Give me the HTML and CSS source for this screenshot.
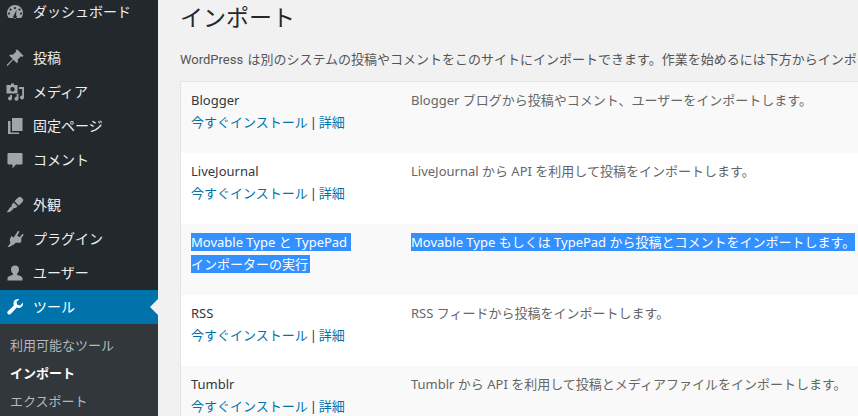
FILE: index.html
```html
<!DOCTYPE html>
<html lang="ja">
<head>
    <meta charset="UTF-8">
    <title>インポート</title>
    <link rel="stylesheet" href="styles.css">
</head>
<body>
  <div class="page">
    <nav class="sidebar">
      <ul class="menu">
        <li class="menu-item">
          <svg class="menu-icon" viewBox="0 0 20 20"><path d="M10 3a8 8 0 0 0-8 8c0 2 .7 3.700 1.900 5h12.200A7.900 7.900 0 0 0 18 11a8 8 0 0 0-8-8zm0 2a1.100 1.100 0 1 1 0 2.200A1.100 1.100 0 0 1 10 5zM5.500 6.500a1.100 1.100 0 1 1 0 2.200 1.100 1.100 0 0 1 0-2.200zm9 0a1.100 1.100 0 1 1 0 2.200 1.100 1.100 0 0 1 0-2.200zM4 10.500a1.100 1.100 0 1 1 0 2.200 1.100 1.100 0 0 1 0-2.200zm12 0a1.100 1.100 0 1 1 0 2.200 1.100 1.100 0 0 1 0-2.200zM11.500 8l-.4 5.300a1.800 1.800 0 1 1-2.200 0z" fill-rule="evenodd"/></svg>
          <span>ダッシュボード</span>
        </li>
        <li class="menu-item gap">
          <svg class="menu-icon" viewBox="0 0 20 20"><path d="M12.300 1.500l6.200 6.200-1.300 1.200-1.200-.6-3.300 3.300c.5 1.400.2 2.800-.7 3.700L8.300 11.700 2.500 18l-.9-.9 6.100-6-3.500-3.700c.9-.9 2.400-1.200 3.700-.7L11.200 3.400l-.6-1.100z"/></svg>
          <span>投稿</span>
        </li>
        <li class="menu-item">
          <svg class="menu-icon" viewBox="0 0 20 20"><path d="M6 3V1.500h3V3h3.500v8.500h-11V3zm1.500 2a2.200 2.200 0 1 0 0 4.400 2.200 2.200 0 0 0 0-4.400zM14 5h5v10.500a2 2 0 1 1-1.800-2V7h-3.200zM7 13v3.500a2 2 0 1 1-1.800-2V13zm6.500-1v4.800a2 2 0 1 1-1.800-2V12z" fill-rule="evenodd"/></svg>
          <span>メディア</span>
        </li>
        <li class="menu-item">
          <svg class="menu-icon" viewBox="0 0 20 20"><path d="M7 2h10.500v13H7z"/><path d="M5.500 5H3v13h11v-1.500H5.500z"/></svg>
          <span>固定ページ</span>
        </li>
        <li class="menu-item">
          <svg class="menu-icon" viewBox="0 0 20 20"><path d="M3.500 3h13a1 1 0 0 1 1 1v9.500a1 1 0 0 1-1 1H11L7.500 18.500v-4h-4a1 1 0 0 1-1-1V4a1 1 0 0 1 1-1z"/></svg>
          <span>コメント</span>
        </li>
        <li class="menu-item gap-small">
          <svg class="menu-icon" viewBox="0 0 20 20"><path d="M12 3.500c1-1 2.500-2 3.500-1.800l2.800 2.800c.2 1-.8 2.500-1.800 3.500l-2.700 2.500-4.300-4.300z"/><path d="M8.700 7.500l3.800 3.800-1.500 1.500c-.6.600-1.600.4-2.300.3-.4 1-2.500 3.400-4.500 3.900-1 .2-2 .4-2.700.2 1.500-1 2-2.500 2.700-3.600.6-1 1.500-1.800 2.600-2.300-.1-.7-.2-1.800.4-2.400z"/></svg>
          <span>外観</span>
        </li>
        <li class="menu-item">
          <svg class="menu-icon" viewBox="0 0 20 20"><path d="M13.100 1.800l1.500 1-2.500 3.600 2.700 1.900 2.500-3.600 1.400 1-2.600 3.700c.6 1.500.4 3.200-.7 4.400l-4.800-.1-1 1.400L4.200 18H2.500l3-4.100c-.7-1.300-.9-3-.3-4.400l1.200-2.600 2.300 1.700z"/></svg>
          <span>プラグイン</span>
        </li>
        <li class="menu-item">
          <svg class="menu-icon" viewBox="0 0 20 20"><path d="M10 2.500a4 4 0 0 1 4 4c0 1.700-1 3.500-2 4.300v1c2.500.8 5.500 1.700 5.500 3.700v2h-15v-2c0-2 3-2.900 5.500-3.700v-1c-1-.8-2-2.600-2-4.300a4 4 0 0 1 4-4z"/></svg>
          <span>ユーザー</span>
        </li>
        <li class="menu-item current">
          <svg class="menu-icon" viewBox="0 0 20 20"><path d="M18 5.500c.4 2-.4 4-2.200 5-1.400.7-2.900.6-4.100.1L6 16.800c-.9 1-2.300 1-3.100.2-.9-.9-.8-2.200.1-3.100l5.900-5.500c-.6-1.300-.6-2.900.1-4.200C10 2.500 12.200 1.700 14.200 2.200L11.500 5l.8 2.800 2.900.7z"/></svg>
          <span>ツール</span>
        </li>
      </ul>
      <ul class="submenu">
        <li>利用可能なツール</li>
        <li class="submenu-current">インポート</li>
        <li>エクスポート</li>
      </ul>
    </nav>

    <main class="content">
      <h1 class="title">インポート</h1>
      <p class="intro">WordPress は別のシステムの投稿やコメントをこのサイトにインポートできます。作業を始めるには下方からインポートしたいシステムを選択してください。</p>
      <div class="importers">
        <div class="row">
          <div class="name">Blogger<div class="actions"><a>今すぐインストール</a> | <a>詳細</a></div></div>
          <div class="desc">Blogger ブログから投稿やコメント、ユーザーをインポートします。</div>
        </div>
        <div class="row">
          <div class="name">LiveJournal<div class="actions"><a>今すぐインストール</a> | <a>詳細</a></div></div>
          <div class="desc">LiveJournal から API を利用して投稿をインポートします。</div>
        </div>
        <div class="row">
          <div class="name"><span class="selected">Movable Type と TypePad&nbsp;</span><div class="actions"><span class="selected">インポーターの実行&nbsp;</span></div></div>
          <div class="desc"><span class="selected">Movable Type もしくは TypePad から投稿とコメントをインポートします。</span></div>
        </div>
        <div class="row">
          <div class="name">RSS<div class="actions"><a>今すぐインストール</a> | <a>詳細</a></div></div>
          <div class="desc">RSS フィードから投稿をインポートします。</div>
        </div>
        <div class="row">
          <div class="name">Tumblr<div class="actions"><a>今すぐインストール</a> | <a>詳細</a></div></div>
          <div class="desc">Tumblr から API を利用して投稿とメディアファイルをインポートします。</div>
        </div>
      </div>
    </main>
  </div>
</body>
</html>
```
FILE: styles.css
```css
html, body {
  margin: 0;
  height: 416px;
  overflow: hidden;
}
body {
  background: #f1f1f1;
  color: #555;
  font-family: "Noto Sans", "Noto Sans CJK JP", sans-serif;
  font-size: 13px;
}
ul {
  list-style: none;
  margin: 0;
  padding: 0;
}
.page {
  display: flex;
  height: 416px;
}

/* admin menu */
.sidebar {
  flex: 0 0 158px;
  background: #23282d;
  color: #eee;
  overflow: hidden;
}
.menu {
  margin-top: -5px;
}
.menu-item {
  display: flex;
  align-items: center;
  height: 34px;
  font-size: 14px;
  position: relative;
}
.menu-item span {
  padding-bottom: 2px;
}
.menu-item.gap {
  margin-top: 12px;
}
.menu-item.gap-small {
  margin-top: 11px;
}
.menu-icon {
  flex: 0 0 20px;
  width: 20px;
  height: 20px;
  margin: 0 8px 0 5px;
  fill: #a0a5aa;
}
.current {
  background: #0073aa;
  color: #fff;
}
.current .menu-icon {
  fill: #fff;
}
.current::after {
  content: "";
  position: absolute;
  right: 0;
  top: 9px;
  border: 8px solid transparent;
  border-right-color: #f1f1f1;
  border-left-width: 0;
}
.submenu {
  background: #32373c;
  color: #b4b9be;
  padding-top: 7px;
  height: 100px;
}
.submenu li {
  height: 28px;
  line-height: 28px;
  padding-left: 10px;
  font-size: 13px;
}
.submenu .submenu-current {
  color: #fff;
  font-weight: 700;
}

/* import list */
.content {
  flex: 1;
  min-width: 0;
  padding-left: 22px;
  overflow: hidden;
}
.title {
  margin: 2px 0 0;
  font-size: 23px;
  font-weight: 400;
  line-height: 30px;
  color: #23282d;
}
.intro {
  margin: 18px 0 0;
  font-family: Roboto, "Noto Sans CJK JP", sans-serif;
  line-height: 20px;
  white-space: nowrap;
  word-spacing: 1px;
}
.importers {
  width: 760px;
  margin-top: 11px;
  border: 1px solid #e5e5e5;
  border-bottom: 0;
  background: #fff;
}
.row {
  display: flex;
  height: 71px;
  padding: 7px 0 0 10px;
  box-sizing: border-box;
  line-height: 22px;
}
.row:nth-child(odd) {
  background: #f9f9f9;
}
.name {
  flex: 0 0 220px;
  color: #32373c;
}
.actions {
  word-spacing: -1.5px;
}
.desc {
  flex: 1;
  white-space: nowrap;
  color: #666;
}
a {
  color: #0073aa;
}
.selected {
  background: #3390ff;
  color: #fff;
}
```
